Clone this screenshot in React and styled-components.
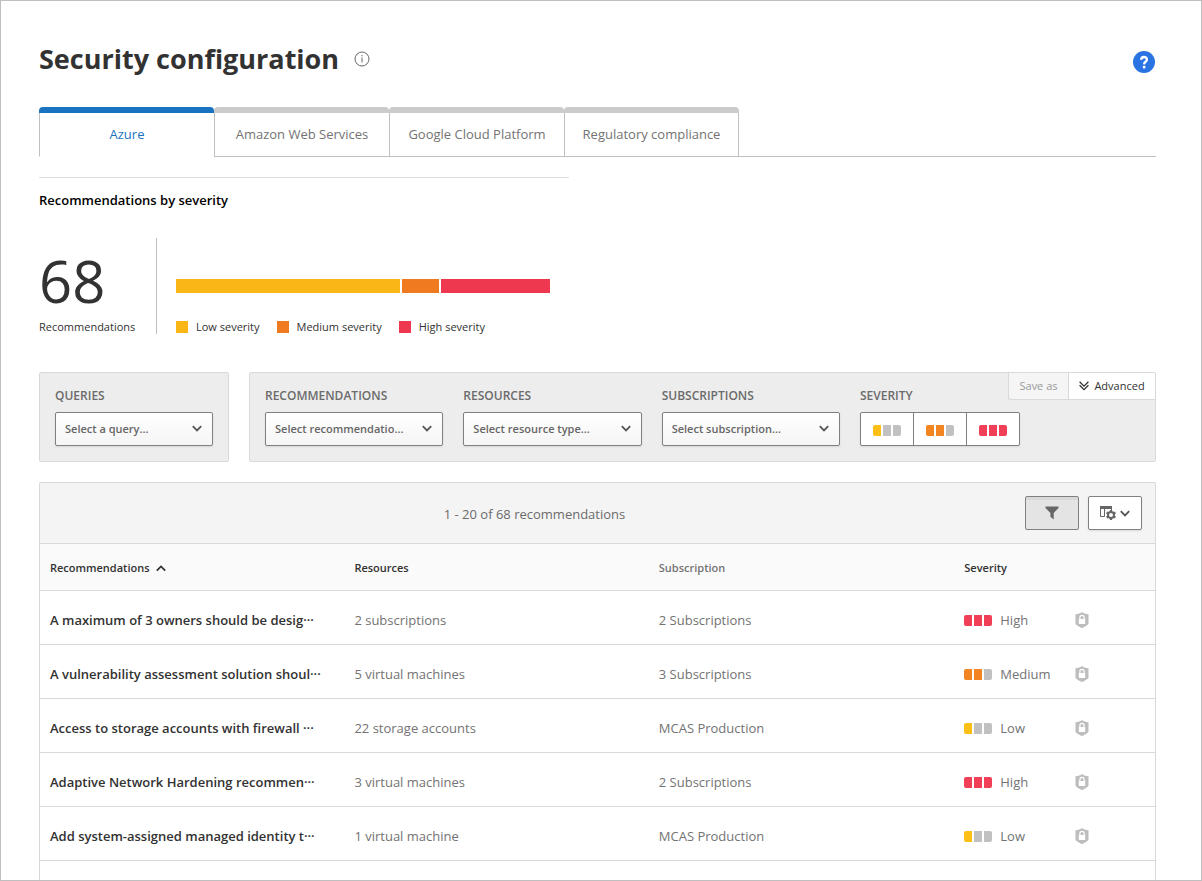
import React from "react";
import styled, { createGlobalStyle, css } from "styled-components";

const GlobalStyle = createGlobalStyle`
  *, *::before, *::after { box-sizing: border-box; }
  body {
    margin: 0;
    background: #fff;
    color: #323232;
    font-family: "Open Sans", "Noto Sans", sans-serif;
    font-size: 13px;
    line-height: 20px;
  }
  button, select { font: inherit; color: inherit; margin: 0; }
`;

const SEVERITY = {
  low: { filled: 1, color: "#fbbf16", label: "Low" },
  medium: { filled: 2, color: "#f28522", label: "Medium" },
  high: { filled: 3, color: "#f03f57", label: "High" },
};

const Page = styled.main`
  display: flex;
  flex-direction: column;
  min-height: 100vh;
  padding: 38px 45px 0 38px;
  border: 1px solid #bfbfbf;
`;

const Header = styled.header`
  display: flex;
  align-items: center;
  gap: 15px;
  height: 40px;
`;

const Title = styled.h1`
  margin: 0;
  font-size: 27px;
  line-height: 40px;
  font-weight: 700;
`;

const IconButton = styled.button`
  display: flex;
  padding: 0;
  border: 0;
  background: none;
  cursor: pointer;
`;

const HelpButton = styled(IconButton)`
  margin: 6px 1px 0 auto;
`;

const Tabs = styled.nav`
  display: flex;
  margin-top: 28px;
  border-bottom: 1px solid #bfbfbf;
`;

const Tab = styled.button`
  width: 175px;
  height: 50px;
  margin-bottom: -1px;
  padding: 0;
  display: flex;
  flex-direction: column;
  border: 0;
  background: none;
  color: ${(p) => (p.$active ? "#1a73c1" : "#737373")};
  font-size: 13px;
  cursor: pointer;

  &::before {
    content: "";
    align-self: stretch;
    height: 6px;
    border-radius: 4px 4px 0 0;
    background: ${(p) => (p.$active ? "#1a73c1" : "#cbcbcb")};
  }
`;

const TabLabel = styled.span`
  flex: 1;
  align-self: stretch;
  display: flex;
  align-items: center;
  justify-content: center;
  padding-bottom: 2px;
  border-left: 1px solid #bfbfbf;
  border-right: ${(p) => (p.$last ? "1px solid #bfbfbf" : "0")};
  border-bottom: 1px solid ${(p) => (p.$active ? "#fff" : "#bfbfbf")};
  background: #fff;
`;

const Summary = styled.section`
  width: 100%;
  max-width: 530px;
  margin-top: 20px;
  padding-top: 12px;
  border-top: 1px solid #dfdfdf;
`;

const SummaryTitle = styled.h2`
  margin: 0;
  color: #000;
  font-size: 13px;
  line-height: 20px;
  font-weight: 600;
`;

const SummaryBody = styled.div`
  display: flex;
  height: 124px;
  padding-top: 28px;
`;

const Total = styled.div`
  width: 118px;
  height: 96px;
  border-right: 1px solid #bfbfbf;
  font-size: 11px;
`;

const TotalNumber = styled.div`
  font-size: 58px;
  line-height: 80px;
  height: 79px;
  padding-top: 3px;
`;

const Chart = styled.div`
  flex: 1;
  padding: 41px 19px 0 19px;
`;

const Bar = styled.div`
  display: flex;
  gap: 2px;
  height: 14px;
`;

const Segment = styled.div`
  flex: ${(p) => p.$share} 1 0;
  background: ${(p) => p.$color};
`;

const Legend = styled.ul`
  display: flex;
  gap: 17px;
  margin: 24px 0 0;
  padding: 0;
  list-style: none;
  font-size: 11px;
  white-space: nowrap;
`;

const LegendItem = styled.li`
  display: flex;
  align-items: center;
  gap: 8px;

  &::before {
    content: "";
    width: 12px;
    height: 12px;
    background: ${(p) => p.$color};
  }
`;

const Filters = styled.div`
  display: flex;
  gap: 20px;
  margin-top: 38px;
`;

const FilterPanel = styled.section`
  position: relative;
  display: grid;
  grid-template-columns: ${(p) => (p.$wide ? "repeat(3, minmax(0, 1fr)) auto" : "158px")};
  gap: 20px;
  flex: ${(p) => (p.$wide ? "1" : "none")};
  height: 90px;
  padding: 13px ${(p) => (p.$wide ? "135px" : "15px")} 10px 15px;
  border: 1px solid #d9d9d9;
  border-radius: 2px;
  background: #ededed;
`;

const FieldLabel = styled.label`
  display: block;
  height: 26px;
  color: #6b6b6b;
  font-size: 12px;
  line-height: 20px;
  font-weight: 600;
`;

const SelectBox = styled.div`
  position: relative;

  svg {
    position: absolute;
    right: 11px;
    top: 13px;
    pointer-events: none;
  }
`;

const controlFrame = css`
  height: 34px;
  border: 1px solid #808080;
  border-radius: 2px;
  box-shadow: 0 1px 2px rgba(0, 0, 0, 0.1);
`;

const Select = styled.select`
  ${controlFrame}
  appearance: none;
  width: 100%;
  padding: 0 24px 0 9px;
  background: linear-gradient(#fff, #f5f5f5);
  color: #666;
  font-size: 11px;
  font-weight: 600;
`;

const SeverityGroup = styled.div`
  ${controlFrame}
  display: flex;
  width: 160px;
  background: #fff;
`;

const SeverityButton = styled.button`
  flex: 1;
  display: flex;
  align-items: center;
  justify-content: center;
  padding: 3px 0 0;
  border: 0;
  background: none;
  cursor: pointer;

  & + & {
    border-left: 1px solid #808080;
  }
`;

const CornerActions = styled.div`
  position: absolute;
  top: 0;
  right: 0;
  display: flex;
`;

const CornerButton = styled.button`
  display: flex;
  align-items: center;
  justify-content: center;
  gap: 5px;
  width: ${(p) => (p.$muted ? "60px" : "87px")};
  height: 27px;
  padding: 0;
  border: 0 solid #d9d9d9;
  border-width: 0 0 1px 1px;
  border-radius: ${(p) => (p.$muted ? "0 0 0 3px" : "0")};
  background: ${(p) => (p.$muted ? "#f5f5f5" : "#fff")};
  color: ${(p) => (p.$muted ? "#999" : "#323232")};
  font-size: 11px;
`;

const Meter = styled.span`
  display: inline-flex;
  gap: 2px;
`;

const MeterCell = styled.span`
  width: 8px;
  height: 11px;
  background: ${(p) => p.$color};

  &:first-child { border-radius: 2px 0 0 2px; }
  &:last-child { border-radius: 0 2px 2px 0; }
`;

const Results = styled.section`
  flex: 1;
  margin-top: 20px;
  border: 1px solid #d9d9d9;
  border-bottom: 0;
  border-radius: 2px 2px 0 0;
`;

const Toolbar = styled.div`
  display: flex;
  align-items: center;
  gap: 9px;
  height: 61px;
  padding: 0 13px;
  border-bottom: 1px solid #d9d9d9;
  background: #f4f4f4;
`;

const Count = styled.p`
  flex: 1;
  margin: 0;
  padding-top: 2px;
  color: #6b6b6b;
  text-align: center;
`;

const ToolButton = styled.button`
  ${controlFrame}
  display: flex;
  align-items: center;
  justify-content: center;
  gap: 3px;
  width: 54px;
  padding: 0;
  background: ${(p) => (p.$pressed ? "#e4e4e4" : "#fff")};
  box-shadow: ${(p) => (p.$pressed ? "inset 0 3px 0 #d9d9d9" : "0 1px 2px rgba(0, 0, 0, 0.1)")};
  cursor: pointer;
`;

const Table = styled.table`
  width: 100%;
  table-layout: fixed;
  border-collapse: separate;
  border-spacing: 0;
`;

const Col = styled.col`
  width: ${(p) => p.$width};
`;

const HeadCell = styled.th`
  height: 47px;
  padding: 2px 10px 0;
  border-bottom: 1px solid #d9d9d9;
  background: #fafafa;
  color: ${(p) => (p.$muted ? "#737373" : "#323232")};
  font-size: 11px;
  font-weight: 600;
  text-align: left;
  white-space: nowrap;
`;

const SortButton = styled(IconButton)`
  align-items: center;
  gap: 6px;
`;

const Cell = styled.td`
  height: 54px;
  padding: 5px 10px 0;
  border-bottom: 1px solid #d9d9d9;
  color: #737373;
  white-space: nowrap;
`;

const NameLink = styled.a`
  color: #323232;
  font-weight: 600;
  text-decoration: none;
`;

const SeverityValue = styled.span`
  display: flex;
  align-items: center;
  gap: 8px;
`;

function Chevron({ up, color = "#555" }) {
  return (
    <svg width="10" height="7" viewBox="0 0 10 7" fill="none" stroke={color} strokeWidth="1.8" aria-hidden="true">
      <path d={up ? "M.8 5.6 5 1.4 9.2 5.6" : "M.8 1.2 5 5.4 9.2 1.2"} />
    </svg>
  );
}

function InfoIcon() {
  return (
    <svg width="16" height="16" viewBox="0 0 16 16" fill="none" stroke="#666" aria-hidden="true">
      <circle cx="8" cy="8" r="7" />
      <path d="M8 6.5v5M8 4v1.3" />
    </svg>
  );
}

function HelpIcon() {
  return (
    <svg width="22" height="22" viewBox="0 0 22 22" aria-hidden="true">
      <circle cx="11" cy="11" r="11" fill="#2a73e3" />
      <path d="M8.2 8.7C8.3 6.9 9.4 6 11 6c1.7 0 2.9.9 2.9 2.4 0 1.1-.6 1.7-1.4 2.3-.9.7-1.3 1.1-1.4 2.6" fill="none" stroke="#fff" strokeWidth="2.4" />
      <rect x="9.8" y="14.8" width="2.6" height="2.6" rx=".6" fill="#fff" />
    </svg>
  );
}

function DoubleChevron() {
  return (
    <svg width="10" height="10" viewBox="0 0 10 10" fill="none" stroke="#323232" strokeWidth="1.3" aria-hidden="true">
      <path d="M.6.8 5 5.1 9.4.8M.6 4.3 5 8.6 9.4 4.3" />
    </svg>
  );
}

function FilterIcon() {
  return (
    <svg width="14" height="14" viewBox="0 0 14 14" fill="#666" aria-hidden="true">
      <path d="M.5.5h13v1.6L8.7 7v6.5L5.4 10.7V7L.5 2.1z" />
    </svg>
  );
}

function ColumnsIcon() {
  return (
    <svg width="17" height="15" viewBox="0 0 17 15" fill="none" stroke="#666" aria-hidden="true">
      <path d="M0 1.5h12" strokeWidth="3" />
      <path d="M.5 2v8.5h4V2M11.5 2v2" />
      <circle cx="11" cy="9" r="3" strokeWidth="2" />
      <path d="M11 4v2M11 12v2M6.6 6.5l1.8 1M13.6 10.500l1.800 1M15.400 6.500l-1.800 1M8.400 10.500l-1.800 1" strokeWidth="2.200" />
    </svg>
  );
}

function ShieldLockIcon() {
  return (
    <svg width="14" height="16" viewBox="0 0 14 16" aria-hidden="true">
      <path d="M7 0c1.6 1.3 3.7 2.1 6.5 2.3v9.2c0 1-2.900 3.100-6.500 4.500C3.400 14.600.5 12.500.5 11.500V2.300C3.300 2.100 5.400 1.300 7 0z" fill="#bdbdbd" />
      <path d="M3.800 7h6.400v5H3.800z" fill="#fff" />
      <path d="M4.900 7.200V5.500c0-1.300.8-2.100 2.100-2.100s2.100.8 2.100 2.100v1.700" fill="none" stroke="#fff" strokeWidth="1.200" />
    </svg>
  );
}

function SeverityMeter({ level }) {
  const { filled, color } = SEVERITY[level];
  return (
    <Meter>
      {[0, 1, 2].map((i) => (
        <MeterCell key={i} $color={i < filled ? color : "#c1c1c1"} />
      ))}
    </Meter>
  );
}

function SelectField({ id, label, placeholder }) {
  return (
    <div>
      <FieldLabel htmlFor={id}>{label}</FieldLabel>
      <SelectBox>
        <Select id={id}>
          <option>{placeholder}</option>
        </Select>
        <Chevron />
      </SelectBox>
    </div>
  );
}

const TABS = ["Azure", "Amazon Web Services", "Google Cloud Platform", "Regulatory compliance"];

const BREAKDOWN = [
  { label: "Low severity", share: 224, color: "#f9b616" },
  { label: "Medium severity", share: 37, color: "#f07a20" },
  { label: "High severity", share: 109, color: "#ee384f" },
];

const ROWS = [
  ["A maximum of 3 owners should be desig···", "2 subscriptions", "2 Subscriptions", "high"],
  ["A vulnerability assessment solution shoul···", "5 virtual machines", "3 Subscriptions", "medium"],
  ["Access to storage accounts with firewall ···", "22 storage accounts", "MCAS Production", "low"],
  ["Adaptive Network Hardening recommen···", "3 virtual machines", "2 Subscriptions", "high"],
  ["Add system-assigned managed identity t···", "1 virtual machine", "MCAS Production", "low"],
];

export default function App() {
  return (
    <>
      <GlobalStyle />
      <Page>
        <Header>
          <Title>Security configuration</Title>
          <IconButton aria-label="Information"><InfoIcon /></IconButton>
          <HelpButton aria-label="Help"><HelpIcon /></HelpButton>
        </Header>

        <Tabs>
          {TABS.map((name, i) => (
            <Tab key={name} $active={i === 0}>
              <TabLabel $active={i === 0} $last={i === TABS.length - 1}>{name}</TabLabel>
            </Tab>
          ))}
        </Tabs>

        <Summary>
          <SummaryTitle>Recommendations by severity</SummaryTitle>
          <SummaryBody>
            <Total>
              <TotalNumber>68</TotalNumber>
              Recommendations
            </Total>
            <Chart>
              <Bar>
                {BREAKDOWN.map((b) => <Segment key={b.label} $share={b.share} $color={b.color} />)}
              </Bar>
              <Legend>
                {BREAKDOWN.map((b) => <LegendItem key={b.label} $color={b.color}>{b.label}</LegendItem>)}
              </Legend>
            </Chart>
          </SummaryBody>
        </Summary>

        <Filters>
          <FilterPanel>
            <SelectField id="queries" label="QUERIES" placeholder="Select a query..." />
          </FilterPanel>
          <FilterPanel $wide>
            <SelectField id="recommendations" label="RECOMMENDATIONS" placeholder="Select recommendatio..." />
            <SelectField id="resources" label="RESOURCES" placeholder="Select resource type..." />
            <SelectField id="subscriptions" label="SUBSCRIPTIONS" placeholder="Select subscription..." />
            <div>
              <FieldLabel as="span" id="severity-label">SEVERITY</FieldLabel>
              <SeverityGroup role="group" aria-labelledby="severity-label">
                {Object.keys(SEVERITY).map((level) => (
                  <SeverityButton key={level} aria-label={SEVERITY[level].label}>
                    <SeverityMeter level={level} />
                  </SeverityButton>
                ))}
              </SeverityGroup>
            </div>
            <CornerActions>
              <CornerButton $muted>Save as</CornerButton>
              <CornerButton><DoubleChevron />Advanced</CornerButton>
            </CornerActions>
          </FilterPanel>
        </Filters>

        <Results>
          <Toolbar>
            <Count>1 - 20 of 68 recommendations</Count>
            <ToolButton $pressed aria-label="Filter"><FilterIcon /></ToolButton>
            <ToolButton aria-label="Columns"><ColumnsIcon /><Chevron /></ToolButton>
          </Toolbar>
          <Table>
            <colgroup>
              <Col $width="27.3%" />
              <Col $width="27.3%" />
              <Col $width="27.4%" />
              <Col $width="9.9%" />
              <Col />
            </colgroup>
            <thead>
              <tr>
                <HeadCell><SortButton>Recommendations <Chevron up color="#323232" /></SortButton></HeadCell>
                <HeadCell>Resources</HeadCell>
                <HeadCell $muted>Subscription</HeadCell>
                <HeadCell>Severity</HeadCell>
                <HeadCell aria-label="Status" />
              </tr>
            </thead>
            <tbody>
              {ROWS.map(([name, resources, subscription, level]) => (
                <tr key={name}>
                  <Cell><NameLink href="#">{name}</NameLink></Cell>
                  <Cell>{resources}</Cell>
                  <Cell>{subscription}</Cell>
                  <Cell>
                    <SeverityValue>
                      <SeverityMeter level={level} />
                      {SEVERITY[level].label}
                    </SeverityValue>
                  </Cell>
                  <Cell><SeverityValue><ShieldLockIcon /></SeverityValue></Cell>
                </tr>
              ))}
            </tbody>
          </Table>
        </Results>
      </Page>
    </>
  );
}
